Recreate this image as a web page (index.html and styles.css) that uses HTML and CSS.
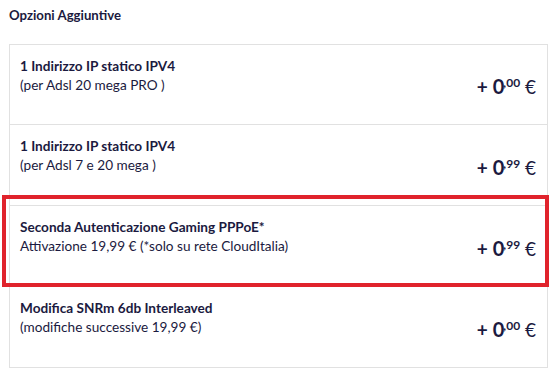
FILE: index.html
```html
<!DOCTYPE html>
<html lang="it">
<head>
<meta charset="utf-8">
<link rel="stylesheet" href="styles.css">
</head>
<body>
<div class="page">
  <h2 class="heading">Opzioni Aggiuntive</h2>
  <div class="list">
    <div class="row">
      <div class="info">
        <div class="name">1 Indirizzo IP statico IPV4</div>
        <div class="desc">(per Adsl 20 mega PRO )</div>
      </div>
      <div class="price"><span class="plus">+</span> 0<sup>,00</sup> <span class="eur">€</span></div>
    </div>
    <div class="row">
      <div class="info">
        <div class="name">1 Indirizzo IP statico IPV4</div>
        <div class="desc">(per Adsl 7 e 20 mega )</div>
      </div>
      <div class="price"><span class="plus">+</span> 0<sup>,99</sup> <span class="eur">€</span></div>
    </div>
    <div class="row">
      <div class="info">
        <div class="name">Seconda Autenticazione Gaming PPPoE*</div>
        <div class="desc">Attivazione 19,99 € (*solo su rete CloudItalia)</div>
      </div>
      <div class="price"><span class="plus">+</span> 0<sup>,99</sup> <span class="eur">€</span></div>
    </div>
    <div class="row">
      <div class="info">
        <div class="name">Modifica SNRm 6db Interleaved</div>
        <div class="desc">(modifiche successive 19,99 €)</div>
      </div>
      <div class="price"><span class="plus">+</span> 0<sup>,00</sup> <span class="eur">€</span></div>
    </div>
  </div>
  <div class="highlight"></div>
</div>
</body>
</html>
```
FILE: styles.css
```css
* { box-sizing: border-box; }
html, body { margin: 0; padding: 0; background: #fff; }
body {
  font-family: Lato, "Open Sans", "Liberation Sans", sans-serif;
  color: #1b1a40;
  width: 551px;
  height: 374px;
  overflow: hidden;
}
.page {
  position: relative;
  padding: 7px 3px 0 9px;
}
.heading {
  margin: 0;
  font-size: 13.2px;
  font-weight: 700;
  line-height: 16px;
  height: 37px;
}
.list {
  display: flex;
  flex-direction: column;
  width: 539px;
}
.row {
  display: flex;
  align-items: center;
  justify-content: space-between;
  height: 82px;
  border: 1px solid #e1e1e1;
  margin-top: -1px;
  padding: 0 11px 0 10px;
}
.row:first-child { margin-top: 0; height: 81px; }
.info {
  align-self: flex-start;
  padding-top: 12px;
}
.name {
  font-size: 13.6px;
  font-weight: 700;
  line-height: 18px;
}
.desc {
  font-size: 13.6px;
  line-height: 20px;
}
.price {
  font-size: 20px;
  font-weight: 700;
  white-space: nowrap;
  margin-top: 3px;
}
.price .plus { font-size: 19px; }
.price .eur { font-size: 19px; font-weight: 400; }
.price sup {
  font-size: 12px;
  vertical-align: 7px;
  line-height: 0;
  margin-left: -1px;
}
.highlight {
  position: absolute;
  left: 2px;
  top: 195px;
  width: 547px;
  height: 92px;
  border: 4px solid #e0232c;
  pointer-events: none;
}
```
